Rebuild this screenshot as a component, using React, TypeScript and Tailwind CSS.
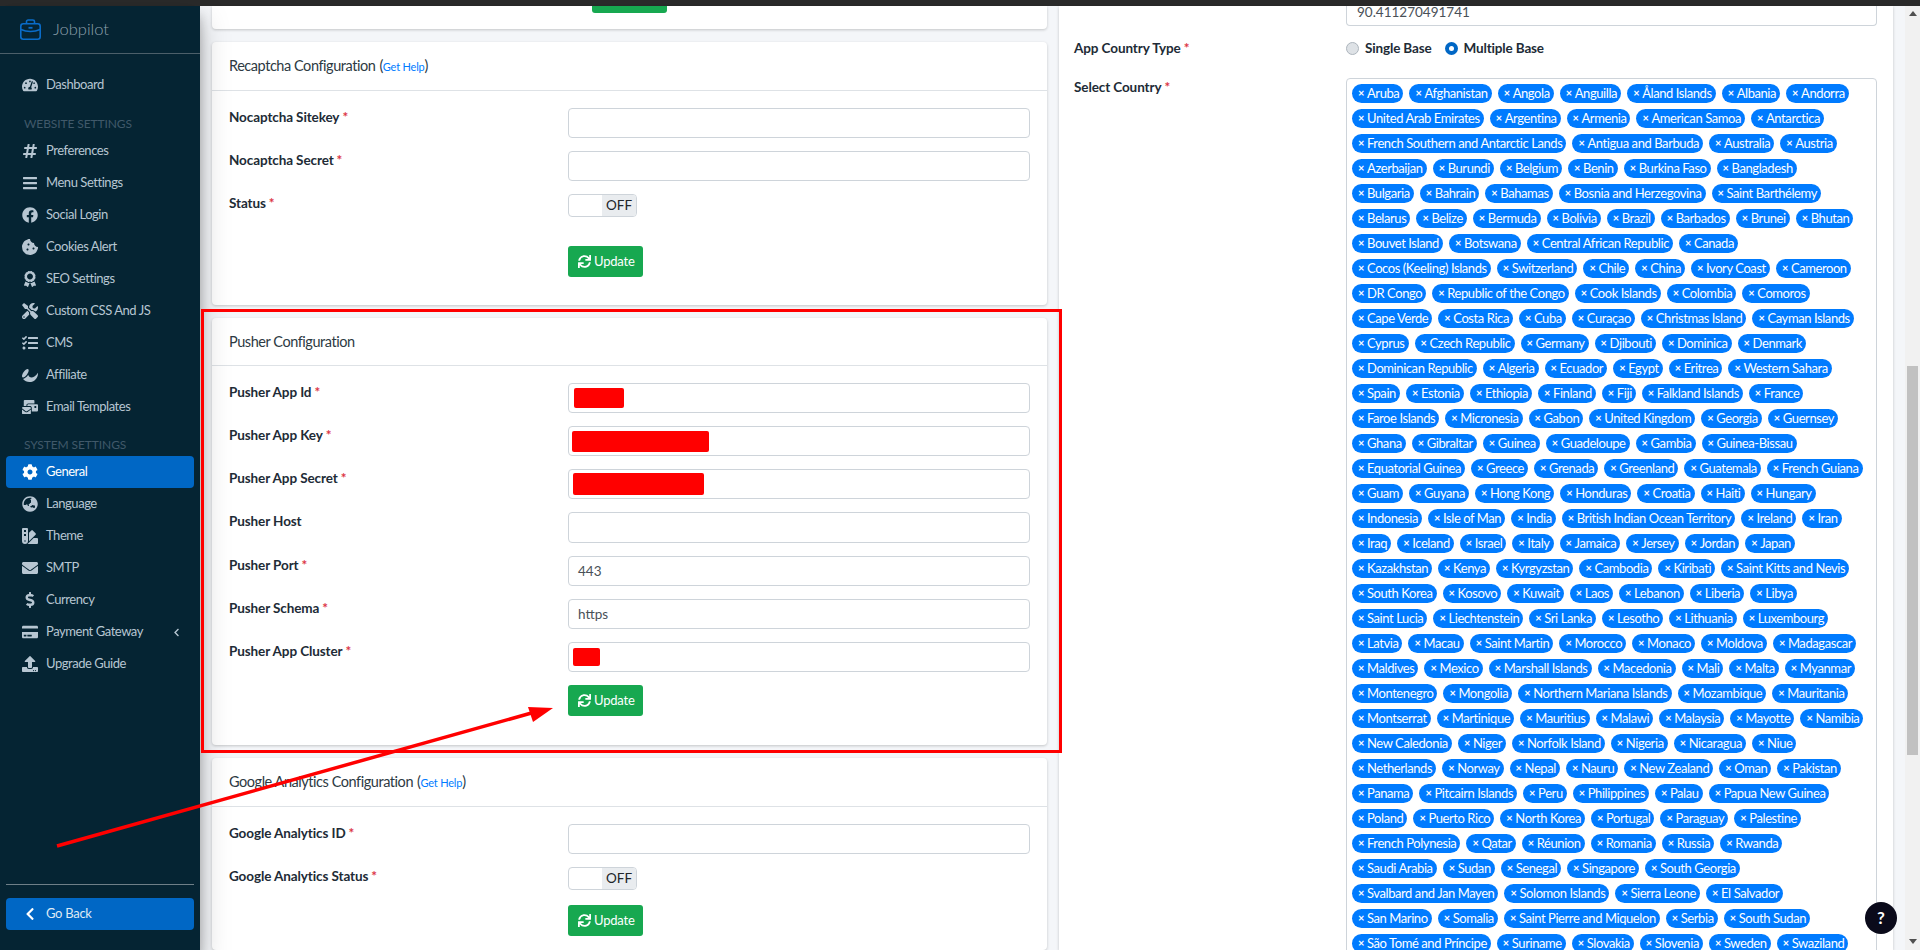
import {
  FaAffiliatetheme,
  FaAward,
  FaBars,
  FaChevronLeft,
  FaCog,
  FaCookieBite,
  FaCreditCard,
  FaDollarSign,
  FaEnvelope,
  FaFacebook,
  FaGlobeAsia,
  FaHashtag,
  FaMailBulk,
  FaSwatchbook,
  FaSync,
  FaTachometerAlt,
  FaTasks,
  FaTools,
  FaUpload,
} from 'react-icons/fa';
import type { ReactNode } from 'react';

const websiteLinks = [
  { label: 'Preferences', icon: <FaHashtag /> },
  { label: 'Menu Settings', icon: <FaBars /> },
  { label: 'Social Login', icon: <FaFacebook /> },
  { label: 'Cookies Alert', icon: <FaCookieBite /> },
  { label: 'SEO Settings', icon: <FaAward /> },
  { label: 'Custom CSS And JS', icon: <FaTools /> },
  { label: 'CMS', icon: <FaTasks /> },
  { label: 'Affiliate', icon: <FaAffiliatetheme /> },
  { label: 'Email Templates', icon: <FaMailBulk /> },
];

const systemLinks = [
  { label: 'General', icon: <FaCog />, active: true },
  { label: 'Language', icon: <FaGlobeAsia /> },
  { label: 'Theme', icon: <FaSwatchbook /> },
  { label: 'SMTP', icon: <FaEnvelope /> },
  { label: 'Currency', icon: <FaDollarSign /> },
  { label: 'Payment Gateway', icon: <FaCreditCard />, caret: true },
  { label: 'Upgrade Guide', icon: <FaUpload /> },
];

const countryRows = [
  ['Aruba', 'Afghanistan', 'Angola', 'Anguilla', 'Åland Islands', 'Albania', 'Andorra'],
  ['United Arab Emirates', 'Argentina', 'Armenia', 'American Samoa', 'Antarctica'],
  ['French Southern and Antarctic Lands', 'Antigua and Barbuda', 'Australia', 'Austria'],
  ['Azerbaijan', 'Burundi', 'Belgium', 'Benin', 'Burkina Faso', 'Bangladesh'],
  ['Bulgaria', 'Bahrain', 'Bahamas', 'Bosnia and Herzegovina', 'Saint Barthélemy'],
  ['Belarus', 'Belize', 'Bermuda', 'Bolivia', 'Brazil', 'Barbados', 'Brunei', 'Bhutan'],
  ['Bouvet Island', 'Botswana', 'Central African Republic', 'Canada'],
  ['Cocos (Keeling) Islands', 'Switzerland', 'Chile', 'China', 'Ivory Coast', 'Cameroon'],
  ['DR Congo', 'Republic of the Congo', 'Cook Islands', 'Colombia', 'Comoros'],
  ['Cape Verde', 'Costa Rica', 'Cuba', 'Curaçao', 'Christmas Island', 'Cayman Islands'],
  ['Cyprus', 'Czech Republic', 'Germany', 'Djibouti', 'Dominica', 'Denmark'],
  ['Dominican Republic', 'Algeria', 'Ecuador', 'Egypt', 'Eritrea', 'Western Sahara'],
  ['Spain', 'Estonia', 'Ethiopia', 'Finland', 'Fiji', 'Falkland Islands', 'France'],
  ['Faroe Islands', 'Micronesia', 'Gabon', 'United Kingdom', 'Georgia', 'Guernsey'],
  ['Ghana', 'Gibraltar', 'Guinea', 'Guadeloupe', 'Gambia', 'Guinea-Bissau'],
  ['Equatorial Guinea', 'Greece', 'Grenada', 'Greenland', 'Guatemala', 'French Guiana'],
  ['Guam', 'Guyana', 'Hong Kong', 'Honduras', 'Croatia', 'Haiti', 'Hungary'],
  ['Indonesia', 'Isle of Man', 'India', 'British Indian Ocean Territory', 'Ireland', 'Iran'],
  ['Iraq', 'Iceland', 'Israel', 'Italy', 'Jamaica', 'Jersey', 'Jordan', 'Japan'],
  ['Kazakhstan', 'Kenya', 'Kyrgyzstan', 'Cambodia', 'Kiribati', 'Saint Kitts and Nevis'],
  ['South Korea', 'Kosovo', 'Kuwait', 'Laos', 'Lebanon', 'Liberia', 'Libya'],
  ['Saint Lucia', 'Liechtenstein', 'Sri Lanka', 'Lesotho', 'Lithuania', 'Luxembourg'],
  ['Latvia', 'Macau', 'Saint Martin', 'Morocco', 'Monaco', 'Moldova', 'Madagascar'],
  ['Maldives', 'Mexico', 'Marshall Islands', 'Macedonia', 'Mali', 'Malta', 'Myanmar'],
  ['Montenegro', 'Mongolia', 'Northern Mariana Islands', 'Mozambique', 'Mauritania'],
  ['Montserrat', 'Martinique', 'Mauritius', 'Malawi', 'Malaysia', 'Mayotte', 'Namibia'],
  ['New Caledonia', 'Niger', 'Norfolk Island', 'Nigeria', 'Nicaragua', 'Niue'],
  ['Netherlands', 'Norway', 'Nepal', 'Nauru', 'New Zealand', 'Oman', 'Pakistan'],
  ['Panama', 'Pitcairn Islands', 'Peru', 'Philippines', 'Palau', 'Papua New Guinea'],
  ['Poland', 'Puerto Rico', 'North Korea', 'Portugal', 'Paraguay', 'Palestine'],
  ['French Polynesia', 'Qatar', 'Réunion', 'Romania', 'Russia', 'Rwanda'],
  ['Saudi Arabia', 'Sudan', 'Senegal', 'Singapore', 'South Georgia'],
  ['Svalbard and Jan Mayen', 'Solomon Islands', 'Sierra Leone', 'El Salvador'],
  ['San Marino', 'Somalia', 'Saint Pierre and Miquelon', 'Serbia', 'South Sudan'],
  ['São Tomé and Príncipe', 'Suriname', 'Slovakia', 'Slovenia', 'Sweden', 'Swaziland'],
];

function NavItem({ label, icon, active, caret }: { label: string; icon: ReactNode; active?: boolean; caret?: boolean }) {
  return (
    <div
      className={`mx-[6px] flex h-[32px] items-center gap-[6px] rounded-[4px] pl-[14px] pr-[13px] text-[13px] tracking-[-0.45px] ${
        active ? 'bg-[#0067c5] text-white' : 'text-[#b7c6d2]'
      }`}
    >
      <span className="flex w-[20px] justify-center text-[16px]">{icon}</span>
      <span className="flex-1 pb-px">{label}</span>
      {caret && <FaChevronLeft className="text-[9px]" />}
    </div>
  );
}

function Sidebar() {
  return (
    <aside className="z-10 flex w-[200px] shrink-0 flex-col bg-[#052433] shadow-[0_14px_28px_rgba(0,0,0,0.25),0_10px_10px_rgba(0,0,0,0.22)]">
      <div className="flex h-[48px] items-center gap-[12px] border-b border-[#4c5f6a] pl-[20px]">
        <svg width="21" height="22" viewBox="0 0 21 22" fill="none" stroke="#0a6cc9" strokeWidth="1.6">
          <rect x="0.8" y="4.8" width="19.4" height="15.4" rx="2.5" />
          <path d="M6.5 4.5V2.6c0-.9.7-1.6 1.6-1.6h4.8c.9 0 1.6.7 1.6 1.6v1.9" />
          <path d="M1 10.5c3 1.4 6 2 9.5 2s6.500-.6 9.500-2" />
          <path d="M8.500 8.800h4" strokeWidth="1.800" />
        </svg>
        <span className="text-[16.500px] font-light text-[#8fa1ad]">Jobpilot</span>
      </div>
      <div className="pt-[15px]">
        <NavItem label="Dashboard" icon={<FaTachometerAlt />} />
      </div>
      <div className="flex h-[34px] items-end pb-[2px] pl-[24px] text-[12px] tracking-[-0.1px] text-[#40596a]">WEBSITE SETTINGS</div>
      {websiteLinks.map((link) => (
        <NavItem key={link.label} label={link.label} icon={link.icon} />
      ))}
      <div className="flex h-[33px] items-end pb-[2px] pl-[24px] text-[12px] tracking-[-0.1px] text-[#40596a]">SYSTEM SETTINGS</div>
      {systemLinks.map((link) => (
        <NavItem key={link.label} label={link.label} icon={link.icon} active={link.active} caret={link.caret} />
      ))}
      <div className="mt-auto px-[6px] pb-[20px]">
        <div className="border-t border-[#6f7f88] pt-[13px]">
          <div className="flex h-[32px] items-center gap-[6px] rounded-[4px] bg-[#0067c5] pl-[14px] text-[13px] tracking-[-0.3px] text-[#dfeaf5]">
            <span className="flex w-[20px] justify-center text-[14px] text-white">
              <FaChevronLeft />
            </span>
            <span className="pb-px">Go Back</span>
          </div>
        </div>
      </div>
    </aside>
  );
}

function Label({ text, required = true }: { text: string; required?: boolean }) {
  return (
    <div className="-mt-px h-[20px] w-[339px] shrink-0 text-[13.500px] font-bold leading-[20px] tracking-[-0.1px] text-[#212b36]">
      {text}
      {required && <span className="ml-[3px] text-[#dc3545]">*</span>}
    </div>
  );
}

function Field({ children, tall }: { children?: ReactNode; tall?: boolean }) {
  return (
    <div
      className={`flex w-[462px] items-center rounded-[4px] border border-[#ced4da] bg-white text-[13.500px] text-[#495057] ${
        tall ? 'h-[31px]' : 'h-[30px]'
      }`}
    >
      {children}
    </div>
  );
}

function Toggle() {
  return (
    <div className="flex h-[23px] w-[69px] overflow-hidden rounded-[4px] border border-[#ced4da] text-[13.500px] text-[#212529]">
      <div className="w-[33px]" />
      <div className="flex flex-1 items-center justify-center bg-[#e9ecef]">OFF</div>
    </div>
  );
}

function UpdateButton({ className }: { className: string }) {
  return (
    <div className={`flex h-[31px] w-[75px] items-center gap-[3px] rounded-[3px] bg-[#17a850] pl-[10px] text-[13px] tracking-[-0.2px] text-white ${className}`}>
      <FaSync className="text-[13px]" />
      Update
    </div>
  );
}

function Row({ label, required, children, className = '' }: { label: string; required?: boolean; children: ReactNode; className?: string }) {
  return (
    <div className={`flex ${className}`}>
      <Label text={label} required={required} />
      {children}
    </div>
  );
}

function Card({ title, help, header = 'h-[49px]', body, children }: { title: string; help?: boolean; header?: string; body: string; children: ReactNode }) {
  return (
    <section className="rounded-[4px] bg-white shadow-[0_1px_3px_rgba(0,0,0,0.2)]">
      <div className={`flex items-center border-b border-[#dee2e6] pl-[17px] text-[14.500px] tracking-[-0.45px] text-[#2d3a43] ${header}`}>
        {title}
        {help && (
          <span className="ml-[4px]">
            (<span className="text-[11px] tracking-[-0.2px] text-[#007bff]">Get Help</span>)
          </span>
        )}
      </div>
      <div className={`flex flex-col gap-[13px] pl-[17px] pt-[17px] ${body}`}>{children}</div>
    </section>
  );
}

function LeftColumn() {
  return (
    <div className="flex w-[835px] shrink-0 flex-col gap-[13px]">
      <div className="h-[23px] rounded-b-[4px] bg-white pl-[380px] shadow-[0_1px_3px_rgba(0,0,0,0.2)]">
        <div className="h-[7px] w-[75px] rounded-b-[3px] bg-[#17a850]" />
      </div>

      <Card title="Recaptcha Configuration" help body="pb-[28px]">
        <Row label="Nocaptcha Sitekey"><Field /></Row>
        <Row label="Nocaptcha Secret"><Field /></Row>
        <Row label="Status"><Toggle /></Row>
        <UpdateButton className="ml-[339px] mt-[16px]" />
      </Card>

      <Card title="Pusher Configuration" header="h-[48px]" body="pb-[29px]">
        <Row label="Pusher App Id">
          <Field><div className="ml-[5px] h-[20px] w-[50px] rounded-[2px] bg-[#ff0000]" /></Field>
        </Row>
        <Row label="Pusher App Key">
          <Field><div className="ml-[3px] h-[21px] w-[137px] rounded-[2px] bg-[#ff0000]" /></Field>
        </Row>
        <Row label="Pusher App Secret">
          <Field><div className="ml-[4px] h-[22px] w-[131px] rounded-[2px] bg-[#ff0000]" /></Field>
        </Row>
        <Row label="Pusher Host" required={false}><Field tall /></Row>
        <Row label="Pusher Port"><Field><span className="pl-[9px]">443</span></Field></Row>
        <Row label="Pusher Schema"><Field><span className="pl-[9px]">https</span></Field></Row>
        <Row label="Pusher App Cluster">
          <Field><div className="ml-[4px] h-[18px] w-[27px] rounded-[2px] bg-[#ff0000]" /></Field>
        </Row>
        <UpdateButton className="ml-[339px]" />
      </Card>

      <Card title="Google Analytics Configuration" help body="pb-[14px]">
        <Row label="Google Analytics ID"><Field /></Row>
        <Row label="Google Analytics Status"><Toggle /></Row>
        <UpdateButton className="ml-[339px] mt-[2px]" />
      </Card>
    </div>
  );
}

function Radio({ checked, label }: { checked?: boolean; label: string }) {
  return (
    <div className="flex items-center gap-[6px] text-[13.500px] font-bold tracking-[-0.15px] text-[#212b36]">
      {checked ? (
        <span className="flex h-[13px] w-[13px] items-center justify-center rounded-full bg-[#0067c5]">
          <span className="h-[5px] w-[5px] rounded-full bg-white" />
        </span>
      ) : (
        <span className="h-[13px] w-[13px] rounded-full border border-[#adb5bd] bg-[#dee2e6]" />
      )}
      {label}
    </div>
  );
}

function RightColumn() {
  return (
    <div className="h-full w-[834px] shrink-0 bg-white pl-[15px] shadow-[0_1px_3px_rgba(0,0,0,0.2)]">
      <div className="ml-[272px] h-[20px] w-[531px] rounded-b-[4px] border-x border-b border-[#ced4da] pl-[10px] text-[13.500px] leading-[13px] text-[#495057]">
        90.411270491741
      </div>
      <div className="mt-[12px] flex h-[20px] items-center">
        <div className="w-[272px] shrink-0 text-[13.500px] font-bold tracking-[-0.1px] text-[#212b36]">
          App Country Type<span className="ml-[3px] text-[#dc3545]">*</span>
        </div>
        <div className="flex gap-[13px]">
          <Radio label="Single Base" />
          <Radio checked label="Multiple Base" />
        </div>
      </div>
      <div className="mt-[19px] flex">
        <div className="w-[272px] shrink-0 text-[13.500px] font-bold leading-[20px] tracking-[-0.1px] text-[#212b36]">
          Select Country<span className="ml-[3px] text-[#dc3545]">*</span>
        </div>
        <div className="mt-px flex h-[900px] w-[531px] flex-col gap-[6px] rounded-[4px] border border-[#ced4da] pl-[5px] pt-[5px]">
          {countryRows.map((row) => (
            <div key={row[0]} className="flex gap-[6px]">
              {row.map((name) => (
                <span key={name} className="flex h-[19px] items-center whitespace-nowrap rounded-full bg-[#007bff] pl-[6px] pr-[4px] text-[13px] tracking-[-0.42px] text-white">
                  <span className="mr-[3px] w-[6px] text-[11px] font-bold">×</span>
                  {name}
                </span>
              ))}
            </div>
          ))}
        </div>
      </div>
    </div>
  );
}

function Scrollbar() {
  return (
    <div className="flex w-[15px] shrink-0 flex-col items-center bg-[#f1f1f1]">
      <div className="mt-[5px] h-0 w-0 border-x-[4px] border-b-[5px] border-x-transparent border-b-[#505050]" />
      <div className="mt-[350px] h-[389px] w-[11px] bg-[#c1c1c1]" />
      <div className="mt-auto mb-[6px] h-0 w-0 border-x-[4px] border-t-[5px] border-x-transparent border-t-[#505050]" />
    </div>
  );
}

export default function App() {
  return (
    <div className="relative flex h-[950px] flex-col overflow-hidden bg-[#f4f6f9] font-[Lato,sans-serif]">
      <div className="h-[6px] shrink-0 bg-[#2a2a2a]" />
      <div className="flex min-h-0 flex-1">
        <Sidebar />
        <main className="flex min-w-0 flex-1 gap-[12px] px-[12px]">
          <LeftColumn />
          <RightColumn />
        </main>
        <Scrollbar />
      </div>

      {/* annotation drawn on top of the screenshot */}
      <div className="pointer-events-none absolute left-[201px] top-[309px] z-20 h-[444px] w-[861px] border-[3px] border-[#ff0000]" />
      <svg className="pointer-events-none absolute left-0 top-0 z-30" width="1920" height="950" fill="none">
        <path d="M57 846L535 712" stroke="#ff0000" strokeWidth="3.500" />
        <path d="M553 708L528 707L533 722Z" fill="#ff0000" />
      </svg>
      <div className="absolute left-[1865px] top-[902px] z-30 flex h-[32px] w-[32px] items-center justify-center rounded-full bg-[#0a0a1a] text-[17px] font-bold text-white">
        ?
      </div>
    </div>
  );
}
